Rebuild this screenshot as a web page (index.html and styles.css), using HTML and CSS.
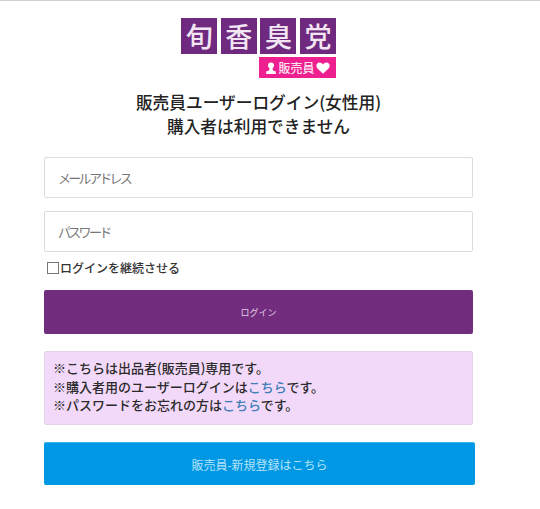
FILE: index.html
```html
<!DOCTYPE html>
<html lang="ja">
<head>
<meta charset="utf-8">
<title>販売員ユーザーログイン</title>
<link rel="stylesheet" href="styles.css">
</head>
<body>
<main class="page">
  <div class="logo">
    <div class="logo-row">
      <span class="tile">旬</span><span class="tile">香</span><span class="tile">臭</span><span class="tile">党</span>
    </div>
    <div class="badge">
      <svg class="badge-icon" viewBox="0 0 12 12" aria-hidden="true"><circle cx="6" cy="3.6" r="3"/><path d="M4.6 6h2.800l.6 2.600 2.800 1V12H1.200V9.600l2.800-1z"/></svg>
      <span>販売員</span>
      <svg class="badge-icon heart" viewBox="0 0 14 12" aria-hidden="true"><path d="M7 11.800 1.200 6.200C-.6 4 .6.600 3.600.600 5 .6 6.300 1.400 7 2.600 7.700 1.400 9 .6 10.400.6c3 0 4.200 3.400 2.400 5.600z"/></svg>
    </div>
  </div>
  <h1 class="title">販売員ユーザーログイン(女性用)<br>購入者は利用できません</h1>
  <form class="form">
    <input class="field" type="text" placeholder="メールアドレス">
    <input class="field" type="password" placeholder="パスワード">
    <label class="keep"><span class="box"></span>ログインを継続させる</label>
    <button class="btn btn-login" type="button">ログイン</button>
    <div class="note">
      ※こちらは出品者(販売員)専用です。<br>
      ※購入者用のユーザーログインは<a href="#">こちら</a>です。<br>
      ※パスワードをお忘れの方は<a href="#">こちら</a>です。
    </div>
    <button class="btn btn-register" type="button">販売員-新規登録はこちら</button>
  </form>
</main>
</body>
</html>
```
FILE: styles.css
```css
* { box-sizing: border-box; }
html, body { margin: 0; padding: 0; background: #fff; }
body {
  height: 509px;
  overflow: hidden;
  border-top: 1px solid #cfcfcf;
  font-family: "Open Sans", "Noto Sans CJK JP", sans-serif;
  color: #333;
}
.page { padding: 17px 67px 0 44px; }
.logo { width: 155px; margin-left: 137px; display: flex; flex-direction: column; align-items: flex-end; }
.logo-row { display: flex; gap: 3.6px; }
.tile {
  width: 36px; height: 36px;
  background: #6f2a80;
  color: #f3e6f3;
  font: 500 27px/35px "Noto Sans CJK JP", sans-serif;
  text-align: center;
}
.badge {
  width: 77px; height: 21px; margin-top: 3px;
  background: #ee1f8f;
  color: #fde3f0;
  display: flex; align-items: center; justify-content: center; gap: 1px;
  font: 500 12px/21px "Noto Sans CJK JP", sans-serif;
}
.badge-icon { width: 12px; height: 12px; fill: #fff; flex: none; }
.heart { width: 14px; }
.title {
  margin: 12px 0 0;
  font: 500 16.700px/24px "Noto Sans CJK JP", sans-serif;
  color: #222;
  text-align: center;
}
.form { margin-top: 19px; display: flex; flex-direction: column; }
.field {
  display: block; width: 100%; height: 41px;
  margin-bottom: 13px; padding: 0 13px;
  border: 1px solid #dcdcdc; border-radius: 2px;
  background: #fff;
  font: 13px "Noto Sans CJK JP", sans-serif;
  letter-spacing: -2.700px;
}
.field:nth-child(2) { margin-bottom: 10px; }
.field::placeholder { color: #777; opacity: 1; }
.keep {
  display: flex; align-items: center; height: 16px; margin-top: -2px;
  padding-left: 3px;
  font: 500 12px/16px "Noto Sans CJK JP", sans-serif;
  color: #333;
}
.box { width: 12px; height: 12px; border: 1px solid #777; background: #fff; margin-right: 1px; flex: none; }
.btn {
  display: block; width: 100%; border: 0; border-radius: 2px;
  font: 400 9px "Noto Sans CJK JP", sans-serif;
  text-align: center;
}
.btn-login { height: 44px; margin-top: 14px; background: #722d7e; color: #e2cfe6; }
.note {
  height: 74px; margin-top: 17px; padding: 7px 8px;
  background: #f3d9f9; border: 1px solid #e5d3e8; border-radius: 2px;
  font: 500 13px/18.500px "Noto Sans CJK JP", sans-serif;
  color: #2b2b2b;
  white-space: nowrap;
}
.note a { color: #3f7fb5; text-decoration: none; }
.btn-register {
  height: 43px; width: 431px; margin-top: 17px;
  background: #0098e4; color: #b5e3f9;
  font-size: 12px;
  border-top: 1px solid #40b4ee;
}
```
